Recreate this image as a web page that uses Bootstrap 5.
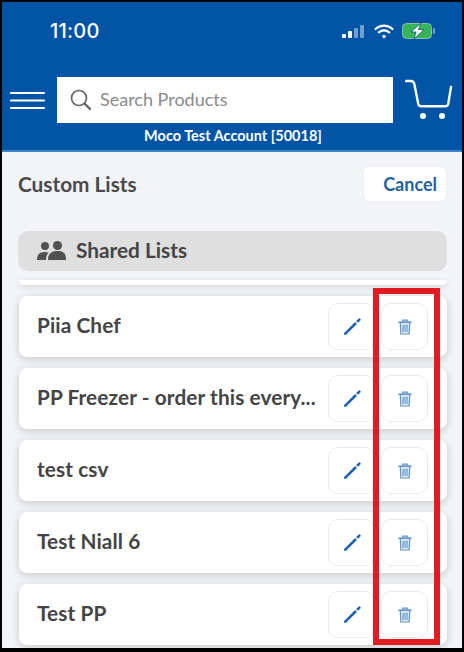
<!DOCTYPE html>
<html lang="en">
<head>
    <meta charset="UTF-8">
    <meta name="viewport" content="width=device-width, initial-scale=1.0">
    <title>Custom Lists</title>
    <link href="https://cdn.jsdelivr.net/npm/bootstrap@5.3.0/dist/css/bootstrap.min.css" rel="stylesheet">
    <style>
        html, body { margin: 0; height: 652px; overflow: hidden; background: #000; }
        body { font-family: Lato, "Open Sans", "Liberation Sans", sans-serif; color: #444; }
        .phone-frame {
            position: relative;
            height: 646px;
            margin: 2px;
            background: #f2f4f7;
            overflow: hidden;
        }
        .top-header {
            height: 150px;
            background: #0054a6;
            border-bottom: 2px solid #3f83c4;
            color: #fff;
        }
        .status-row { height: 64px; padding: 15px 27px 0 48px; }
        .clock { font-size: 20px; font-weight: 500; letter-spacing: .2px; line-height: 28px; font-family: Inter, sans-serif; }
        .search-row { height: 46px; padding: 0 4px 0 8px; gap: 11px; margin-top: 11px; }
        .search-box {
            width: 336px;
            height: 46px;
            background: #fff;
            color: #8a8a8a;
            font-size: 18px;
            padding-left: 13px;
            gap: 9px;
        }
        .search-box span { padding-bottom: 2px; }
        .account-name { font-size: 14.5px; font-weight: 700; line-height: 16px; margin-top: 5px; padding-left: 2px; }
        .title-row { padding: 14px 15px 0 16px; height: 76px; }
        .page-title { font-size: 20.8px; font-weight: 700; color: #4a4a4a; margin: 0; line-height: 36px; }
        .cancel-btn {
            width: 84px;
            height: 36px;
            background: #fff;
            border: 1px solid #eceef1;
            border-radius: 7px;
            color: #23629f;
            font-size: 18px;
            font-weight: 700;
            padding: 0 9px 0 0;
            text-align: right;
        }
        .shared-bar {
            height: 40px;
            margin: 3px 15px 0 16px;
            background: #dfdfdf;
            border-radius: 10px;
            padding-left: 19px;
            gap: 10px;
            font-size: 20.8px;
            font-weight: 700;
            color: #444;
        }
        .shared-bar span { padding-bottom: 2px; }
        .list-area { padding: 0 15px 0 17px; }
        .peek-card {
            height: 5px;
            margin-top: 9px;
            background: #fff;
            border-radius: 0 0 8px 8px;
            box-shadow: 0 2px 6px rgba(0,0,0,.14);
        }
        .list-row {
            height: 61px;
            margin-top: 11px;
            background: #fff;
            border-radius: 8px;
            box-shadow: 0 2px 8px rgba(0,0,0,.19);
            padding: 0 19px 0 18px;
            gap: 6px;
        }
        .list-name {
            font-size: 20.8px;
            font-weight: 700;
            letter-spacing: .1px;
            color: #444;
            white-space: nowrap;
            padding-bottom: 3px;
        }
        .row-btn {
            width: 47px;
            height: 47px;
            padding: 0;
            background: #fff;
            border: 1px solid #e9ebee;
            border-radius: 10px;
        }
        .red-marker {
            position: absolute;
            left: 371px;
            top: 286px;
            width: 67px;
            height: 357px;
            border: 6px solid #e11b22;
            pointer-events: none;
        }
    </style>
</head>
<body>
    <div class="phone-frame">
        <div class="top-header">
            <div class="status-row d-flex justify-content-between align-items-start">
                <span class="clock">11:00</span>
                <div class="d-flex align-items-center gap-2" style="margin-top:6px">
                    <svg width="24" height="13" viewBox="0 0 24 13">
                        <rect x="0" y="9" width="4" height="4" rx="1" fill="#fff"/>
                        <rect x="6" y="6" width="4" height="7" rx="1" fill="#fff"/>
                        <rect x="12" y="3" width="4" height="10" rx="1" fill="#6f9fcf"/>
                        <rect x="18" y="0" width="4" height="13" rx="1" fill="#6f9fcf"/>
                    </svg>
                    <svg width="20" height="15" viewBox="0 0 20 15" fill="none" stroke="#fff" stroke-width="2.2" stroke-linecap="round">
                        <path d="M1.5 5C6.500.5 13.500.5 18.500 5"/>
                        <path d="M4.800 8.300C7.800 5.800 12.200 5.800 15.200 8.300"/>
                        <circle cx="10" cy="12.500" r="1.300" fill="#fff" stroke-width="1"/>
                    </svg>
                    <svg width="33" height="16" viewBox="0 0 33 16">
                        <rect x=".5" y=".5" width="29" height="15" rx="4" fill="#35b558" stroke="#8fbfa8"/>
                        <rect x="31" y="5" width="2" height="6" rx="1" fill="#6f9fcf"/>
                        <path d="M19 0 9 9h5l-2 7 10-9.500h-5.500z" fill="#fff" stroke="#0b4f7a" stroke-width=".8"/>
                    </svg>
                </div>
            </div>
            <div class="search-row d-flex align-items-center">
                <svg width="36" height="19" viewBox="0 0 36 19" fill="none" stroke="#fff" stroke-width="2.2" stroke-linecap="round">
                    <path d="M1 2h33M1 9.500h33M1 17h33"/>
                </svg>
                <div class="search-box d-flex align-items-center">
                    <svg width="21" height="22" viewBox="0 0 21 22" fill="none" stroke="#666" stroke-width="1.700" stroke-linecap="round">
                        <circle cx="9" cy="9" r="7.500"/>
                        <path d="M14.500 14.500 20 20" stroke-width="2.400"/>
                    </svg>
                    <span>Search Products</span>
                </div>
                <svg width="48" height="42" viewBox="0 0 48 42" fill="none" stroke="#fff" stroke-width="2.400" stroke-linecap="round" stroke-linejoin="round" style="margin-left:1px">
                    <path d="M1 2h5c2 0 2.800 1 3.300 3l4 20c.4 1.700 1.200 2.300 3 2.300h24c1.800 0 2.500-.8 2.900-2.300L46 8"/>
                    <circle cx="18" cy="37" r="3" fill="#fff" stroke="none"/>
                    <circle cx="37" cy="37" r="3" fill="#fff" stroke="none"/>
                </svg>
            </div>
            <div class="account-name text-center">Moco Test Account [50018]</div>
        </div>

        <div class="title-row d-flex justify-content-between align-items-start">
            <h1 class="page-title">Custom Lists</h1>
            <button type="button" class="cancel-btn">Cancel</button>
        </div>

        <div class="shared-bar d-flex align-items-center">
            <svg width="29" height="20" viewBox="0 0 29 20" fill="#505050">
                <circle cx="8" cy="5" r="4"/>
                <circle cx="20.500" cy="4.500" r="4.500"/>
                <path d="M0 19c0-5 2-8 8-8 1.500 0 2.500.2 3.500.6C9.800 13.500 9 16 9 19z"/>
                <path d="M11 19c0-6 3-9 9.500-9S29 13 29 19z"/>
            </svg>
            <span>Shared Lists</span>
        </div>

        <div class="list-area">
            <div class="peek-card"></div>
            <div id="rows"></div>
        </div>

        <div class="red-marker"></div>
    </div>

    <script>
        const names = ["Piia Chef", "PP Freezer - order this every...", "test csv", "Test Niall 6", "Test PP"];
        const pencil = `<svg width="18" height="18" viewBox="0 0 18 18" fill="none" stroke="#1f63a8"><path d="M1.800 16.200 13 5" stroke-width="2.600"/><path d="M1 17l.8-2.600 1.800 1.800z" fill="#1f63a8" stroke="none"/><path d="M14.800 3.200 16.300 1.700" stroke-width="2.600" stroke-linecap="round"/></svg>`;
        const trash = `<svg width="14" height="16" viewBox="0 0 14 16" fill="none" stroke="#5b94cc" stroke-width="1.200" stroke-linecap="round"><path d="M.8 3.200h12.400M4.800 3V1.200h4.400V3"/><path d="M2.200 3.400l.7 11.600h8.200l.7-11.600z" fill="#e3edf7"/><path d="M5 6v6.500M7 6v6.500M9 6v6.500"/></svg>`;
        document.getElementById("rows").innerHTML = names.map(n => `
            <div class="list-row d-flex align-items-center">
                <span class="list-name me-auto">${n}</span>
                <button type="button" class="row-btn d-flex align-items-center justify-content-center flex-shrink-0">${pencil}</button>
                <button type="button" class="row-btn d-flex align-items-center justify-content-center flex-shrink-0">${trash}</button>
            </div>`).join("");
    </script>

    <script src="https://cdn.jsdelivr.net/npm/bootstrap@5.3.0/dist/js/bootstrap.bundle.min.js"></script>
</body>
</html>
